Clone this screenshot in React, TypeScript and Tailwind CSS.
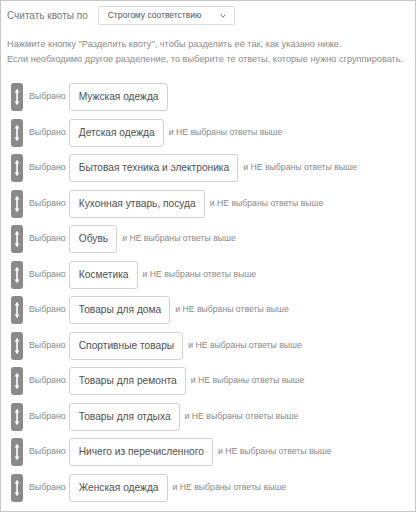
import React from 'react'

const answers = [
  'Мужская одежда',
  'Детская одежда',
  'Бытовая техника и электроника',
  'Кухонная утварь, посуда',
  'Обувь',
  'Косметика',
  'Товары для дома',
  'Спортивные товары',
  'Товары для ремонта',
  'Товары для отдыха',
  'Ничего из перечисленного',
  'Женская одежда',
]

function MoveHandle() {
  return (
    <div className="flex h-[28px] w-[12px] shrink-0 items-center justify-center rounded-[3px] bg-[#8a8a8a]">
      <svg width="6" height="18" viewBox="0 0 6 18" fill="none">
        <path d="M3 1.5v15" stroke="#fff" strokeWidth="1.6" />
        <path d="M0.5 4.5L3 1.2L5.5 4.5Z" fill="#fff" />
        <path d="M0.5 13.5L3 16.8L5.5 13.5Z" fill="#fff" />
      </svg>
    </div>
  )
}

export default function App() {
  return (
    <div className="h-[512px] w-[416px] border border-[#c6c6c6] bg-white text-[#666] [font-family:'Liberation_Sans',Arial,sans-serif]">
      <div className="flex h-[19px] items-center pl-[6px] mt-[5px]">
        <span className="text-[10px] text-[#777]">Считать квоты по</span>
        <div className="ml-[10px] flex h-[19px] w-[137px] items-center justify-between rounded-[2px] border border-[#dcdcdc] pl-[9px] pr-[8px]">
          <span className="text-[8.5px] text-[#555]">Строгому соответствию</span>
          <svg width="6" height="4" viewBox="0 0 6 4" fill="none">
            <path d="M0.6 0.7L3 3.2L5.4 0.7" stroke="#666" strokeWidth="0.9" />
          </svg>
        </div>
      </div>

      <div className="mt-[12px] pl-[6px] text-[9.2px] leading-[15px] text-[#8a8a8a]">
        <p>Нажмите кнопку "Разделить квоту", чтобы разделить её так, как указано ниже.</p>
        <p>Если необходимо другое разделение, то выберите те ответы, которые нужно сгруппировать.</p>
      </div>

      <div className="mt-[16px] flex flex-col gap-[7.5px] pl-[10px]">
        {answers.map((a, i) => (
          <div key={a} className="flex items-center">
            <MoveHandle />
            <span className="ml-[6px] text-[8.8px] text-[#888]">Выбрано</span>
            <div className="ml-[3px] flex h-[28px] items-center rounded-[3px] border border-[#d2d2d2] pl-[9px] pr-[8px] text-[10.2px] text-[#505050]">
              {a}
            </div>
            {i > 0 && (
              <span className="ml-[5px] text-[8.7px] text-[#888]">и НЕ выбраны ответы выше</span>
            )}
          </div>
        ))}
      </div>
    </div>
  )
}
